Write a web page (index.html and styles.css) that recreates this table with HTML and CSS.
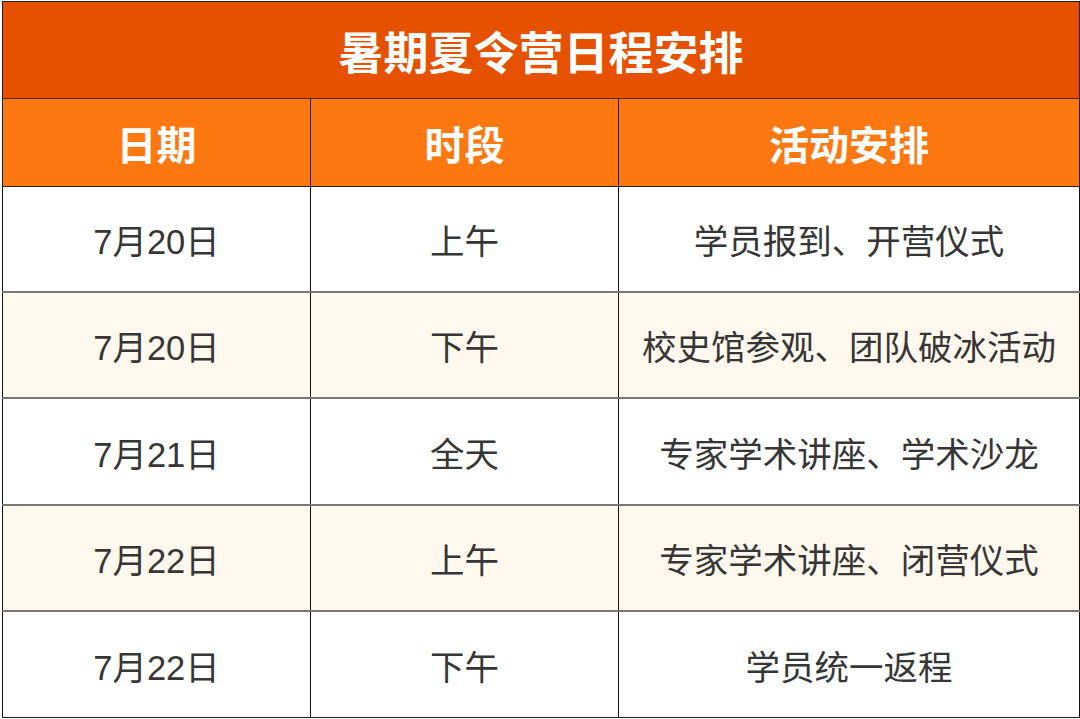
FILE: index.html
```html
<!DOCTYPE html>
<html lang="zh-CN">
<head>
<meta charset="utf-8">
<link rel="stylesheet" href="styles.css">
</head>
<body>
<table class="schedule">
  <colgroup><col class="c1"><col class="c2"><col class="c3"></colgroup>
  <thead>
    <tr class="title-row"><th colspan="3">暑期夏令营日程安排</th></tr>
    <tr class="head-row"><th>日期</th><th>时段</th><th>活动安排</th></tr>
  </thead>
  <tbody>
    <tr><td>7月20日</td><td>上午</td><td>学员报到、开营仪式</td></tr>
    <tr class="alt"><td>7月20日</td><td>下午</td><td>校史馆参观、团队破冰活动</td></tr>
    <tr class="tall"><td>7月21日</td><td>全天</td><td>专家学术讲座、学术沙龙</td></tr>
    <tr class="alt"><td>7月22日</td><td>上午</td><td>专家学术讲座、闭营仪式</td></tr>
    <tr class="last"><td>7月22日</td><td>下午</td><td>学员统一返程</td></tr>
  </tbody>
</table>
</body>
</html>
```
FILE: styles.css
```css
html, body { margin: 0; padding: 0; background: #ffffff; }
body { padding: 1px 0 0 2px; }
.schedule {
  border-collapse: collapse;
  width: 1077px;
  table-layout: fixed;
  font-family: "Noto Sans CJK SC", "Noto Sans", sans-serif;
  border: 1px solid #222;
}
.c1 { width: 308px; }
.c2 { width: 308px; }
.c3 { width: 461px; }
.title-row th {
  background: #e65100;
  color: #ffffff;
  font-size: 45px;
  font-weight: 700;
  height: 96px;
  padding: 0;
  border-bottom: 1px solid #5a2a10;
}
.head-row th {
  background: #fe7811;
  color: #ffffff;
  font-size: 40px;
  font-weight: 700;
  height: 87px;
  padding: 0;
  border-left: 1px solid #222;
  border-right: 1px solid #222;
  border-bottom: 1px solid #222;
}
td {
  height: 104px;
  padding: 0;
  text-align: center;
  font-family: "Liberation Sans", "Noto Sans CJK SC", sans-serif;
  font-size: 34.5px;
  color: #363636;
  border-left: 1px solid #111;
  border-right: 1px solid #111;
  border-bottom: 2px solid #777;
}
tr.tall td { height: 105px; }
tr.last td { height: 105px; border-bottom: 1px solid #222; }
tr.alt td { background: #fff8ee; }
```
